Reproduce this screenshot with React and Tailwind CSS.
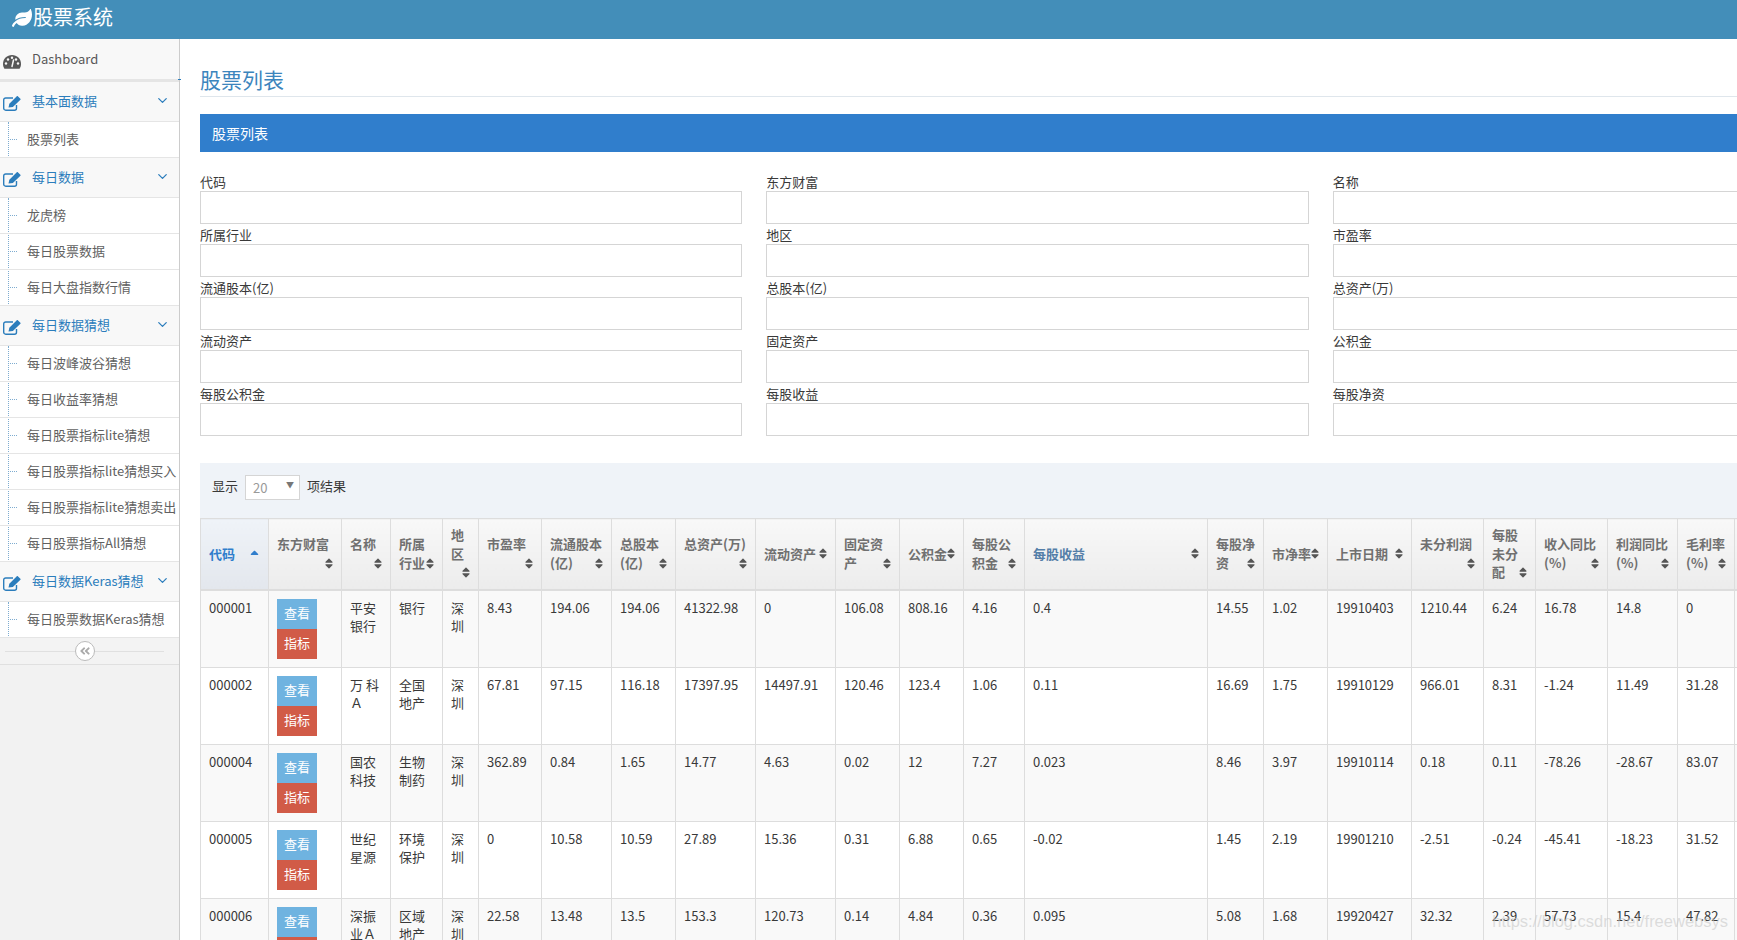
import React from "react";
import { FaLeaf, FaAngleDoubleLeft, FaSort, FaCaretUp } from "react-icons/fa";
import { ChevronDown } from "lucide-react";

const menu = [
  { title: "基本面数据", items: ["股票列表"] },
  { title: "每日数据", items: ["龙虎榜", "每日股票数据", "每日大盘指数行情"] },
  {
    title: "每日数据猜想",
    items: ["每日波峰波谷猜想", "每日收益率猜想", "每日股票指标lite猜想", "每日股票指标lite猜想买入", "每日股票指标lite猜想卖出", "每日股票指标All猜想"],
  },
  { title: "每日数据Keras猜想", items: ["每日股票数据Keras猜想"] },
];

const fields = [
  "代码", "东方财富", "名称",
  "所属行业", "地区", "市盈率",
  "流通股本(亿)", "总股本(亿)", "总资产(万)",
  "流动资产", "固定资产", "公积金",
  "每股公积金", "每股收益", "每股净资",
];

// widths come from the column borders in the screenshot
const columns = [
  { label: "代码", width: "w-[68px]", sorted: true },
  { label: "东方财富", width: "w-[73px]" },
  { label: "名称", width: "w-[49px]" },
  { label: "所属行业", width: "w-[52px]" },
  { label: "地区", width: "w-[36px]" },
  { label: "市盈率", width: "w-[63px]" },
  { label: "流通股本(亿)", width: "w-[70px]" },
  { label: "总股本(亿)", width: "w-[64px]" },
  { label: "总资产(万)", width: "w-[80px]" },
  { label: "流动资产", width: "w-[80px]" },
  { label: "固定资产", width: "w-[64px]" },
  { label: "公积金", width: "w-[64px]" },
  { label: "每股公积金", width: "w-[61px]" },
  { label: "每股收益", width: "w-[183px]", hover: true },
  { label: "每股净资", width: "w-[56px]" },
  { label: "市净率", width: "w-[64px]" },
  { label: "上市日期", width: "w-[84px]" },
  { label: "未分利润", width: "w-[72px]" },
  { label: "每股未分配", width: "w-[52px]" },
  { label: "收入同比(%)", width: "w-[72px]" },
  { label: "利润同比(%)", width: "w-[70px]" },
  { label: "毛利率(%)", width: "w-[57px]" },
  { label: "", width: "w-[100px]" },
];

const rows = [
  ["000001", "平安银行", "银行", "深圳", "8.43", "194.06", "194.06", "41322.98", "0", "106.08", "808.16", "4.16", "0.4", "14.55", "1.02", "19910403", "1210.44", "6.24", "16.78", "14.8", "0"],
  ["000002", "万 科Ａ", "全国地产", "深圳", "67.81", "97.15", "116.18", "17397.95", "14497.91", "120.46", "123.4", "1.06", "0.11", "16.69", "1.75", "19910129", "966.01", "8.31", "-1.24", "11.49", "31.28"],
  ["000004", "国农科技", "生物制药", "深圳", "362.89", "0.84", "1.65", "14.77", "4.63", "0.02", "12", "7.27", "0.023", "8.46", "3.97", "19910114", "0.18", "0.11", "-78.26", "-28.67", "83.07"],
  ["000005", "世纪星源", "环境保护", "深圳", "0", "10.58", "10.59", "27.89", "15.36", "0.31", "6.88", "0.65", "-0.02", "1.45", "2.19", "19901210", "-2.51", "-0.24", "-45.41", "-18.23", "31.52"],
  ["000006", "深振业Ａ", "区域地产", "深圳", "22.58", "13.48", "13.5", "153.3", "120.73", "0.14", "4.84", "0.36", "0.095", "5.08", "1.68", "19920427", "32.32", "2.39", "57.73", "15.4", "47.82"],
];

function GaugeIcon() {
  return (
    <svg viewBox="0 0 18 15" className="ml-[3px] mt-[5px] h-[15px] w-[18px]">
      <path d="M9 1C4 1 0 4.900 0 9.800c0 1.900.5 3.500 1.400 5h15.200c.9-1.500 1.400-3.100 1.400-5C18 4.900 14 1 9 1z" fill="#585858" />
      <circle cx="3" cy="9.500" r="1.200" fill="#f8f8f8" />
      <circle cx="5" cy="5.500" r="1.200" fill="#f8f8f8" />
      <circle cx="9" cy="3.800" r="1.200" fill="#f8f8f8" />
      <circle cx="13" cy="5.500" r="1.200" fill="#f8f8f8" />
      <circle cx="15" cy="9.500" r="1.200" fill="#f8f8f8" />
      <path d="M9 12.500L10.500 6" stroke="#f8f8f8" strokeWidth="1.500" strokeLinecap="round" />
    </svg>
  );
}

function EditIcon() {
  return (
    <svg viewBox="0 0 18 15" fill="none" className="ml-[3px] mt-[3px] h-[15px] w-[18px]">
      <path d="M13.500 9v3.200a2 2 0 0 1-2 2H2.700a2 2 0 0 1-2-2V4a2 2 0 0 1 2-2H10" stroke="currentColor" strokeWidth="1.400" />
      <path d="M5.500 11.500l.8-3.800L13.800.2a.7.7 0 0 1 1 0l2.600 2.600a.7.7 0 0 1 0 1L9.900 11z" fill="currentColor" />
    </svg>
  );
}

function Sidebar() {
  return (
    <aside className="relative w-[180px] shrink-0 border-r border-[#ccc] bg-[#f2f2f2]">
      <div className="flex h-[43px] items-center border-b-[3px] border-[#e5e5e5] bg-[#f8f8f8] text-[#585858]">
        <GaugeIcon />
        <span className="ml-[11px]">Dashboard</span>
      </div>
      <span className="absolute -right-[2px] top-[40px] h-px w-[3px] bg-[#2b7dbc]" />

      {menu.map((group) => (
        <div key={group.title}>
          <div className="flex h-[40px] items-center border-b border-[#e5e5e5] bg-[#f8f8f8] text-[#2b7dbc]">
            <EditIcon />
            <span className="ml-[11px] flex-1">{group.title}</span>
            <ChevronDown size={15} strokeWidth={2} className="mb-[2px] mr-[9px]" />
          </div>
          <ul className="relative bg-white">
            <span className="absolute bottom-0 left-2 top-0 border-l border-dotted border-[#7eacd0]" />
            {group.items.map((item) => (
              <li key={item} className="relative flex h-[36px] items-center border-b border-[#e5e5e5] pl-[27px] whitespace-nowrap text-[#616161]">
                <span className="absolute left-[10px] top-[17px] w-[7px] border-t border-dotted border-[#7eacd0]" />
                {item}
              </li>
            ))}
          </ul>
        </div>
      ))}

      <div className="relative h-[27px] border-b border-[#e0e0e0] bg-[#f3f3f3]">
        <span className="absolute left-[5px] right-[15px] top-[13px] border-t border-[#e0e0e0]" />
        <span className="absolute left-[75px] top-[3px] flex h-[20px] w-[20px] items-center justify-center rounded-full border border-[#bbb] bg-white text-[#aaa]">
          <FaAngleDoubleLeft className="text-[12px]" />
        </span>
      </div>
    </aside>
  );
}

function HeaderCell({ col }) {
  let look = "bg-gradient-to-b from-[#f8f8f8] to-[#ececec] text-[#707070]";
  if (col.sorted) look = "bg-gradient-to-b from-[#eff3f8] to-[#e3e7ed] text-[#307ecc]";
  if (col.hover) look = "bg-gradient-to-b from-[#f8f8f8] to-[#ececec] text-[#547ea8]";
  return (
    <th className={`${col.width} border border-b-2 border-[#ddd] px-2 py-[7px] text-left align-middle font-bold ${look}`}>
      {col.label}
      {col.sorted && <FaCaretUp className="float-right -mr-[1px] mt-[1px] text-[13px] text-[#307ecc]" />}
      {!col.sorted && col.label && (
        <span className="float-right flex h-[1.42857em] w-2 items-center">
          <FaSort className="h-[13px] w-2 text-[#555]" />
        </span>
      )}
    </th>
  );
}

function StockTable() {
  return (
    <table className="w-[1634px] table-fixed border-collapse">
      <thead>
        <tr>
          {columns.map((col, i) => (
            <HeaderCell key={i} col={col} />
          ))}
        </tr>
      </thead>
      <tbody>
        {rows.map((row, r) => (
          <tr key={row[0]} className={r % 2 === 0 ? "h-[77px] bg-[#f9f9f9]" : "h-[77px] bg-white"}>
            <td className="border border-[#ddd] p-2 align-top text-[#393939]">{row[0]}</td>
            <td className="border border-[#ddd] p-2 align-top">
              <button className="block h-[30px] w-[40px] bg-[#6fb3e0] text-white">查看</button>
              <button className="block h-[30px] w-[40px] bg-[#d15b47] text-white">指标</button>
            </td>
            {row.slice(1).map((cell, c) => (
              <td key={c} className="border border-[#ddd] p-2 align-top text-[#393939]">{cell}</td>
            ))}
            <td className="border border-[#ddd] p-2" />
          </tr>
        ))}
      </tbody>
    </table>
  );
}

export default function App() {
  return (
    <div className="relative flex h-screen flex-col overflow-hidden bg-white font-['Noto_Sans_CJK_SC',sans-serif] text-[13px] leading-[1.42857] text-[#393939]">
      <header className="flex h-[39px] shrink-0 items-center bg-[#438eb9] pb-[4px] pl-3 text-[20px] text-white">
        <FaLeaf className="text-[20px]" />
        <span className="ml-px">股票系统</span>
      </header>

      <div className="flex min-h-0 flex-1">
        <Sidebar />

        <main className="min-w-0 flex-1 overflow-hidden pl-5">
          <div className="w-[1700px]">
            <h1 className="mt-[24px] h-[34px] border-b border-[#dfe6ec] text-[21px] leading-[33px] text-[#3c85bd]">股票列表</h1>

            <div className="mt-[17px] flex h-[38px] items-center bg-[#307ecc] pl-3 text-[14px] text-white">股票列表</div>

            <div className="mt-[19px] grid w-[1675px] grid-cols-3 gap-x-6">
              {fields.map((name) => (
                <div key={name}>
                  <label className="block h-[20px] pt-px leading-[20px] text-[#393939]">{name}</label>
                  <input className="block h-[33px] w-full border border-[#d5d5d5] bg-white" />
                </div>
              ))}
            </div>

            <div className="mt-[27px] flex h-[55px] items-start bg-[#eff3f8] pl-3 pt-[12px]">
              <span className="leading-[22px]">显示</span>
              <div className="relative mx-[7px] h-[25px] w-[55px]">
                <select className="h-full w-full appearance-none border border-[#d5d5d5] bg-white pl-[7px] pt-px text-[13px] text-[#999]">
                  <option>20</option>
                </select>
                <span className="pointer-events-none absolute right-[6px] top-[4px] text-[8px] text-[#777]">▼</span>
              </div>
              <span className="leading-[22px]">项结果</span>
            </div>

            <StockTable />
          </div>
        </main>
      </div>

      <span className="pointer-events-none absolute bottom-[6px] right-[9px] font-['Liberation_Sans',sans-serif] text-[16.5px] text-[#c8c8c8]/60">
        https://blog.csdn.net/freewebsys
      </span>
    </div>
  );
}
